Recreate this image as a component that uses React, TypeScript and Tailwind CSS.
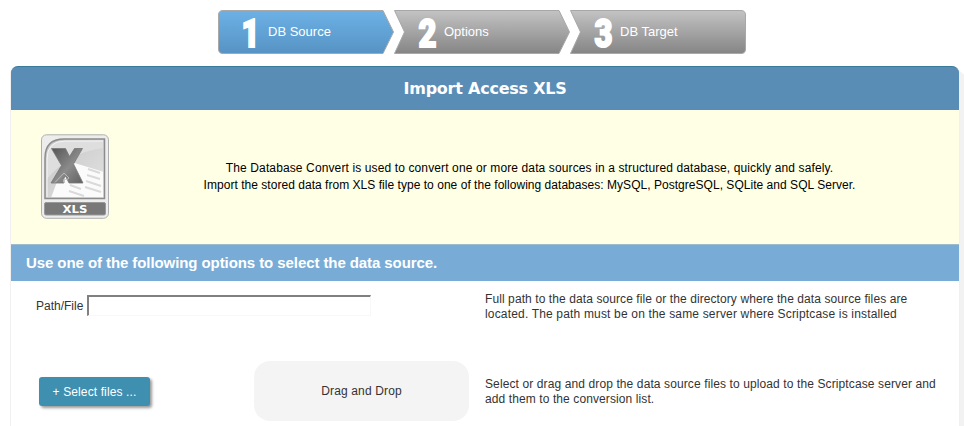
import React from "react";

type StepProps = {
  number: string;
  label: string;
  shape: string;
  active?: boolean;
};

const steps: StepProps[] = [
  { number: "1", label: "DB Source", active: true, shape: "M5 .5H165L175.5 22L165 43.5H5Q.5 43.5 .5 39V5Q.5 .5 5 .5Z" },
  { number: "2", label: "Options", shape: "M.5 .5H165L175.5 22L165 43.5H.5L10.5 22Z" },
  { number: "3", label: "DB Target", shape: "M.5 .5H171Q175.500 .5 175.500 5V39Q175.500 43.5 171 43.5H.5L10.5 22Z" },
];

function Step({ number, label, shape, active }: StepProps) {
  const id = `step-fill-${number}`;
  return (
    <li className="grid h-11 w-44">
      <svg className="col-start-1 row-start-1 overflow-visible" width="176" height="44" viewBox="0 0 176 44">
        <defs>
          <linearGradient id={id} x1="0" y1="0" x2="0" y2="1">
            <stop offset="0" stopColor={active ? "#6cb1e6" : "#c3c3c3"} />
            <stop offset="1" stopColor={active ? "#5793c4" : "#858585"} />
          </linearGradient>
        </defs>
        <path d={shape} fill={`url(#${id})`} stroke="#a8a8a8" />
        <text
          x={active ? 23.5 : 24.5}
          y="36.5"
          fontFamily="Roboto"
          fontWeight="900"
          fontSize="39"
          textLength="18"
          lengthAdjust="spacingAndGlyphs"
          fill="#fff"
          stroke="#fff"
          strokeWidth="2"
        >
          {number}
        </text>
      </svg>
      <span className="col-start-1 row-start-1 pt-[14px] pl-[50px] text-[13px] leading-4 text-white">{label}</span>
    </li>
  );
}

function XlsIcon() {
  return (
    <svg width="70" height="86" viewBox="0 0 70 86">
      <defs>
        <linearGradient id="page" x1="0" y1="0" x2="1" y2="1">
          <stop offset="0" stopColor="#c4c4c4" />
          <stop offset="1" stopColor="#e4e4e4" />
        </linearGradient>
        <linearGradient id="letter" x1="0" y1="0" x2="1" y2="1">
          <stop offset="0" stopColor="#555" />
          <stop offset=".55" stopColor="#8b8b8b" />
          <stop offset="1" stopColor="#606060" />
        </linearGradient>
        <clipPath id="sheet"><path d="M7 63V24Q7 7 24 7H63V63Z" /></clipPath>
      </defs>
      <rect x="1.5" y=".8" width="67" height="83.5" rx="5" fill="#ededed" stroke="#b0b0b0" />
      <path d="M5 64.500V24Q5 5 24 5H64.500V64.500Z" fill="url(#page)" stroke="#8c8c8c" strokeWidth="1.500" />
      <g clipPath="url(#sheet)">
        <path d="M7 45Q30 18 64 14V6H24Q7 6 7 24Z" fill="#dedede" />
        <path d="M11 64L25 26L64 38V64Z" fill="#fbfbfb" />
        <path d="M48 35L60 39M47 41L60 45M46 47L61 52M45 53L61 58M30 51L41 55M29 57L44 62" stroke="#dadada" strokeWidth="2" />
      </g>
      <path d="M7 63V25Q7 7 25 7H63" fill="none" stroke="#f5f5f5" />
      <path d="M11.500 14.500H25.500L29.500 22.500L34.500 14.500H42.500L33.500 30L43 49H29L25.500 42L24 44V49H11L21.500 31.500Z" fill="url(#letter)" stroke="#777" strokeWidth=".8" />
      <path d="M15 48.500L24 39L29 44L27 45.500H23.500V48.500" fill="none" stroke="#c4c4c4" strokeWidth=".8" />
      <rect x="4.500" y="68.500" width="61" height="12.500" rx="1.500" fill="#787878" stroke="#999" />
      <text x="35" y="78.800" textAnchor="middle" fontFamily="DejaVu Sans" fontWeight="bold" fontSize="10.500" fill="#fff" textLength="25" lengthAdjust="spacingAndGlyphs">XLS</text>
    </svg>
  );
}

export default function App() {
  return (
    <div className="h-[426px] w-[964px] overflow-hidden bg-white pt-[10px] font-['Liberation_Sans',sans-serif] text-xs text-[#333]">
      <ol className="ml-[218px] flex">
        {steps.map((step) => <Step key={step.number} {...step} />)}
      </ol>
      <main className="mt-3 ml-[10px] h-[370px] w-[950px] rounded-t-[8px] border-x border-[#f0f0f0] bg-white shadow-[5px_5px_0_#f2f2f2]">
        <h1 className="h-11 rounded-t-[7px] border-t border-[#39799a] bg-[#5a8db6] pt-[10px] text-center font-['DejaVu_Sans',sans-serif] text-base leading-6 font-bold tracking-[-0.24px] text-white">
          Import Access XLS
        </h1>
        <section className="flex h-[134px] bg-[#ffffe5]">
          <div className="w-[98px] pt-6 pl-[29px]"><XlsIcon /></div>
          <div className="grow pt-[50px] pr-[54px] pl-[45px] text-center leading-[17px] whitespace-nowrap text-black">
            <p className="tracking-[0.12px]">The Database Convert is used to convert one or more data sources in a structured database, quickly and safely.</p>
            <p className="tracking-[0.033px]">Import the stored data from XLS file type to one of the following databases: MySQL, PostgreSQL, SQLite and SQL Server.</p>
          </div>
        </section>
        <h2 className="h-[37px] border-t border-[#9dbccc] bg-[#78acd6] pt-[9px] pl-[15px] text-[15px] leading-[18px] font-bold tracking-[-0.08px] text-white">
          Use one of the following options to select the data source.
        </h2>
        <section className="flex h-[80px] pl-[25px]">
          <div className="flex w-[449px] items-start pt-[14px]">
            <label htmlFor="path" className="mt-[3px] w-[51px] leading-4">Path/File</label>
            <input id="path" className="h-[21px] w-[284px] border-t-2 border-r border-b border-l-2 border-t-[#808080] border-r-[#f8f8f8] border-b-[#f8f8f8] border-l-[#808080] outline-none" />
          </div>
          <div className="pt-[11px] leading-[15px] whitespace-nowrap">
            <p className="tracking-[0.09px]">Full path to the data source file or the directory where the data source files are</p>
            <p className="tracking-[0.17px]">located. The path must be on the same server where Scriptcase is installed</p>
          </div>
        </section>
        <section className="flex pl-7">
          <button className="mt-4 h-[29px] w-[111px] rounded-[3px] bg-[#3f8fb1] tracking-[0.12px] text-white shadow-[2px_2px_3px_#999]">+ Select files ...</button>
          <div className="ml-[104px] flex h-[60px] w-[215px] items-center justify-center rounded-[16px] bg-[#f4f4f4] tracking-[0.14px]">Drag and Drop</div>
          <div className="ml-4 pt-4 leading-[15px] whitespace-nowrap">
            <p className="tracking-[0.11px]">Select or drag and drop the data source files to upload to the Scriptcase server and</p>
            <p className="tracking-[0.1px]">add them to the conversion list.</p>
          </div>
        </section>
      </main>
    </div>
  );
}
